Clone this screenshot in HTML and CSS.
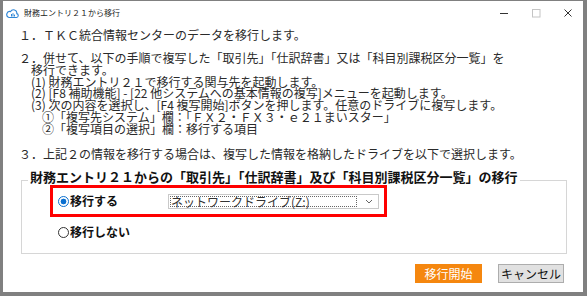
FILE: index.html
```html
<!DOCTYPE html>
<html lang="ja">
<head>
  <meta charset="UTF-8" />
  <title>財務エントリ２１から移行</title>
  <link rel="stylesheet" href="styles.css">
</head>
<body>
  <div class="window">
    <div class="titlebar">
      <svg class="app-icon" width="13" height="12" viewBox="0 0 13 12">
        <path d="M3 10.5 H10.5 A2 2 0 0 0 10.8 6.6 A3.3 3.3 0 0 0 4.6 4.6 A2.4 2.4 0 0 0 3 10.5 Z" fill="#fff" stroke="#2f86d6" stroke-width="1.1"/>
        <path d="M5.5 9.5 L5.5 7 M7 9.5 L7 6.2 M8.5 9.5 L8.5 7.6" stroke="#2f86d6" stroke-width="1"/>
      </svg>
      <span class="title">財務エントリ２１から移行</span>
      <div class="caption-buttons">
        <svg width="10" height="10" viewBox="0 0 10 10"><path d="M1 5.5 H9" stroke="#333" stroke-width="1"/></svg>
        <svg width="10" height="10" viewBox="0 0 10 10"><rect x="1.5" y="1.5" width="7.5" height="7.5" fill="none" stroke="#c4c4c4" stroke-width="1"/></svg>
        <svg width="10" height="10" viewBox="0 0 10 10"><path d="M1.5 1.5 L8.5 8.5 M8.5 1.5 L1.5 8.5" stroke="#333" stroke-width="1"/></svg>
      </div>
    </div>

    <div class="content">
      <p class="step1">１．ＴＫＣ統合情報センターのデータを移行します。</p>

      <div class="step2">
        <p>２．併せて、以下の手順で複写した「取引先」「仕訳辞書」又は「科目別課税区分一覧」を</p>
        <p class="indent1">移行できます。</p>
        <p class="indent1">(1) 財務エントリ２１で移行する関与先を起動します。</p>
        <p class="indent1">(2) [F8 補助機能] - [22 他システムへの基本情報の複写]メニューを起動します。</p>
        <p class="indent1">(3) 次の内容を選択し、[F4 複写開始]ボタンを押します。任意のドライブに複写します。</p>
        <p class="indent2">①「複写先システム」欄：「ＦＸ２・ＦＸ３・ｅ２１まいスター」</p>
        <p class="indent2">②「複写項目の選択」欄：移行する項目</p>
      </div>

      <p class="step3">３．上記２の情報を移行する場合は、複写した情報を格納したドライブを以下で選択します。</p>

      <fieldset class="group">
        <legend>財務エントリ２１からの「取引先」「仕訳辞書」及び「科目別課税区分一覧」の移行</legend>

        <div class="option-row highlight">
          <label class="radio"><input type="radio" name="migrate" checked> 移行する</label>
          <div class="combo">
            <span class="combo-value">ネットワークドライブ(Z:)</span>
            <svg class="combo-arrow" width="8" height="5" viewBox="0 0 8 5"><path d="M1 1 L4 4 L7 1" fill="none" stroke="#666" stroke-width="1"/></svg>
          </div>
        </div>

        <div class="option-row">
          <label class="radio"><input type="radio" name="migrate"> 移行しない</label>
        </div>
      </fieldset>

      <div class="actions">
        <button type="button" class="btn btn-primary">移行開始</button>
        <button type="button" class="btn">キャンセル</button>
      </div>
    </div>
  </div>
</body>
</html>
```

FILE: styles.css
```css
html, body {
  margin: 0;
  height: 296px;
  overflow: hidden;
}
body {
  background: #808080;
  font-family: "Noto Sans CJK JP", "Liberation Sans", sans-serif;
  color: #2a2a2a;
}
p {
  margin: 0;
}
.window {
  margin: 1px 4px 0 3px;
  height: 291px;
  background: #fff;
  display: flex;
  flex-direction: column;
}
.titlebar {
  height: 24px;
  display: flex;
  align-items: center;
  padding-left: 3px;
}
.app-icon {
  margin-right: 5px;
}
.title {
  font-size: 8px;
  line-height: 10px;
  color: #222;
}
.caption-buttons {
  margin-left: auto;
  display: flex;
  gap: 22px;
  padding-right: 10px;
}
.content {
  padding: 4px 16px 0 16px;
  font-size: 12px;
}
.step1 {
  line-height: 12px;
}
.step2 {
  margin-top: 11px;
  line-height: 11.75px;
}
.indent1 {
  padding-left: 12px;
}
.indent2 {
  padding-left: 23px;
}
.step3 {
  margin-top: 13.25px;
  line-height: 12px;
}
.group {
  margin: 10.5px 0 0 2px;
  padding: 0 6px 14px 6px;
  border: 1px solid #d6d6d6;
}
.group legend {
  font-weight: bold;
  font-size: 13px;
  line-height: 14px;
  padding: 0 2px 6px 2px;
  color: #111;
}
.option-row {
  display: flex;
  align-items: center;
  margin-left: 22px;
  margin-top: 8px;
  line-height: 14px;
}
.option-row.highlight {
  margin-top: -5px;
  margin-right: 173px;
  height: 26px;
  border: 3px solid #f00;
  padding: 0 5px;
}
.option-row:not(.highlight) {
  padding-left: 8px;
}
.radio {
  display: flex;
  align-items: center;
  gap: 1px;
  font-weight: bold;
  font-size: 12px;
  color: #111;
}
.radio input {
  appearance: none;
  width: 11px;
  height: 11px;
  margin: 0;
  border: 1px solid #333;
  border-radius: 50%;
  background: #fff;
}
.radio input:checked {
  border-color: #0a6fd0;
  background: radial-gradient(circle, #0a6fd0 0 2.6px, #fff 3.2px);
}
.combo {
  margin-left: auto;
  width: 203px;
  height: 13px;
  border: 1px solid #c9c9c9;
  display: flex;
  align-items: center;
  padding: 0 5px 0 1px;
}
.combo-value {
  width: 185px;
  height: 9px;
  border: 1px dotted #666;
  font-size: 12px;
  line-height: 9px;
  color: #333;
  white-space: nowrap;
}
.combo-arrow {
  margin-left: auto;
}
.actions {
  display: flex;
  justify-content: flex-end;
  gap: 16px;
  margin-top: 10px;
  padding-right: 3px;
}
.btn {
  height: 19px;
  width: 66px;
  padding: 0;
  font-family: inherit;
  font-size: 12px;
  line-height: 17px;
  border: 1px solid #adadad;
  background: #e1e1e1;
  color: #111;
}
.btn-primary {
  width: 67px;
  border-color: #f5870f;
  background: #f5870f;
  color: #fff;
}
```
